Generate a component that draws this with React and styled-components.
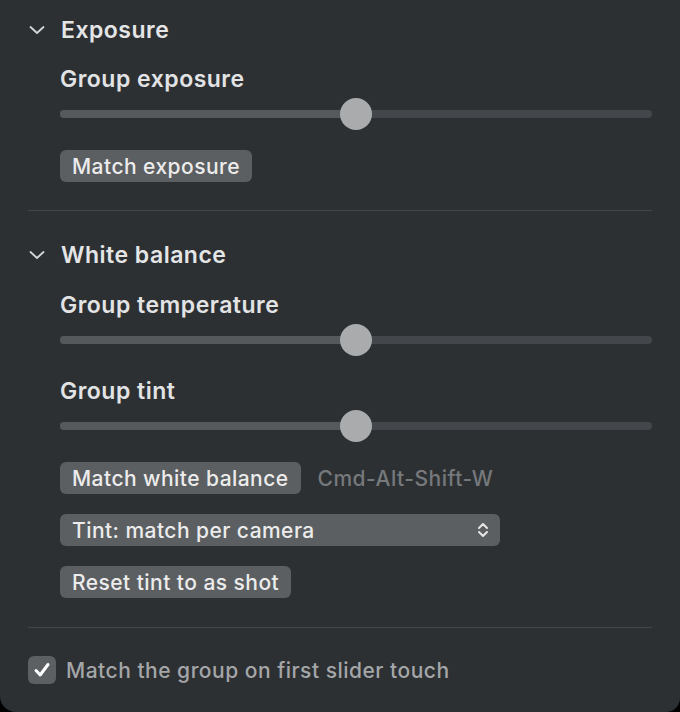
import React from "react";
import styled, { createGlobalStyle } from "styled-components";

const Global = createGlobalStyle`
  html, body { margin: 0; padding: 0; background: #000; }
  body { font-family: Inter, "Noto Sans", sans-serif; -webkit-font-smoothing: antialiased; }
`;

const Panel = styled.div`
  width: 680px;
  height: 712px;
  box-sizing: border-box;
  background: #2d3033;
  border-radius: 0 0 14px 16px;
  padding: 14px 28px 0 28px;
  display: flex;
  flex-direction: column;
  overflow: hidden;
`;

const Header = styled.div`
  height: 32px;
  margin-top: ${(p) => p.$mt || 0}px;
  display: flex;
  align-items: center;
  gap: 15px;
  color: #e4e5e6;
  font-size: 23px;
  font-weight: 600;
  letter-spacing: 0.5px;
`;

const Chevron = styled.svg`
  width: 18px;
  height: 18px;
  flex: none;
`;

const Body = styled.div`
  padding-left: 32px;
  display: flex;
  flex-direction: column;
  align-items: flex-start;
`;

const Label = styled.div`
  height: 30px;
  margin-top: ${(p) => p.$mt || 0}px;
  display: flex;
  align-items: center;
  color: #e2e3e4;
  font-size: 23px;
  font-weight: 600;
  letter-spacing: 0.5px;
`;

const SliderRow = styled.div`
  position: relative;
  width: 100%;
  height: 32px;
  margin-top: 4px;
  display: flex;
  align-items: center;
`;

const Track = styled.div`
  width: 100%;
  height: 8px;
  border-radius: 4px;
  background: #43464a;
  overflow: hidden;
`;

const Fill = styled.div`
  height: 100%;
  background: #56595c;
`;

const Thumb = styled.div`
  position: absolute;
  top: 0;
  width: 32px;
  height: 32px;
  margin-left: -16px;
  border-radius: 50%;
  background: #a9abad;
`;

const Row = styled.div`
  display: flex;
  align-items: center;
  gap: 17px;
  margin-top: ${(p) => p.$mt || 0}px;
`;

const Button = styled.div`
  height: 32px;
  box-sizing: border-box;
  padding: 0 12px;
  display: inline-flex;
  align-items: center;
  background: #5c5f62;
  border-radius: 6px;
  color: #ececec;
  font-size: 21px;
  font-weight: 500;
  letter-spacing: 0.45px;
  white-space: nowrap;
  margin-top: ${(p) => p.$mt || 0}px;
`;

const Select = styled(Button)`
  width: 440px;
  justify-content: space-between;
  padding-right: 10px;
`;

const Shortcut = styled.span`
  color: #76797c;
  font-size: 21px;
  font-weight: 500;
  letter-spacing: 0.5px;
`;

const Divider = styled.div`
  height: 1px;
  background: #44474a;
  margin-top: ${(p) => p.$mt || 0}px;
`;

const CheckRow = styled.div`
  display: flex;
  align-items: center;
  gap: 10px;
  height: 28px;
  margin-top: 28px;
  color: #a4a6a8;
  font-size: 21px;
  font-weight: 500;
  letter-spacing: 0.5px;
`;

const Box = styled.div`
  width: 28px;
  height: 28px;
  border-radius: 6px;
  background: #5d6063;
  display: flex;
  align-items: center;
  justify-content: center;
  flex: none;
`;

const ChevronDown = () => (
  <Chevron viewBox="0 0 18 18">
    <path d="M2.5 6 L9 12 L15.5 6" fill="none" stroke="#d6d7d8" strokeWidth="1.8" strokeLinecap="round" strokeLinejoin="round" />
  </Chevron>
);

const Slider = ({ value }) => (
  <SliderRow>
    <Track>
      <Fill style={{ width: `${value}%` }} />
    </Track>
    <Thumb style={{ left: `${value}%` }} />
  </SliderRow>
);

const UpDown = () => (
  <svg width="14" height="20" viewBox="0 0 14 20">
    <path d="M3 8 L7 4 L11 8 M3 12 L7 16 L11 12" fill="none" stroke="#e6e6e6" strokeWidth="2" strokeLinecap="round" strokeLinejoin="round" />
  </svg>
);

export default function App() {
  return (
    <>
      <Global />
      <Panel>
        <Header>
          <ChevronDown />
          Exposure
        </Header>
        <Body>
          <Label $mt={18}>Group exposure</Label>
          <Slider value={50} />
          <Button $mt={20}>Match exposure</Button>
        </Body>
        <Divider $mt={28} />
        <Header $mt={28}>
          <ChevronDown />
          White balance
        </Header>
        <Body>
          <Label $mt={19}>Group temperature</Label>
          <Slider value={50} />
          <Label $mt={20}>Group tint</Label>
          <Slider value={50} />
          <Row $mt={20}>
            <Button>Match white balance</Button>
            <Shortcut>Cmd-Alt-Shift-W</Shortcut>
          </Row>
          <Select $mt={20}>
            Tint: match per camera
            <UpDown />
          </Select>
          <Button $mt={20}>Reset tint to as shot</Button>
        </Body>
        <Divider $mt={29} />
        <CheckRow>
          <Box>
            <svg width="20" height="20" viewBox="0 0 20 20">
              <path d="M4 10.5 L8.2 15 L16 4.5" fill="none" stroke="#fff" strokeWidth="3" strokeLinecap="round" strokeLinejoin="round" />
            </svg>
          </Box>
          Match the group on first slider touch
        </CheckRow>
      </Panel>
    </>
  );
}
